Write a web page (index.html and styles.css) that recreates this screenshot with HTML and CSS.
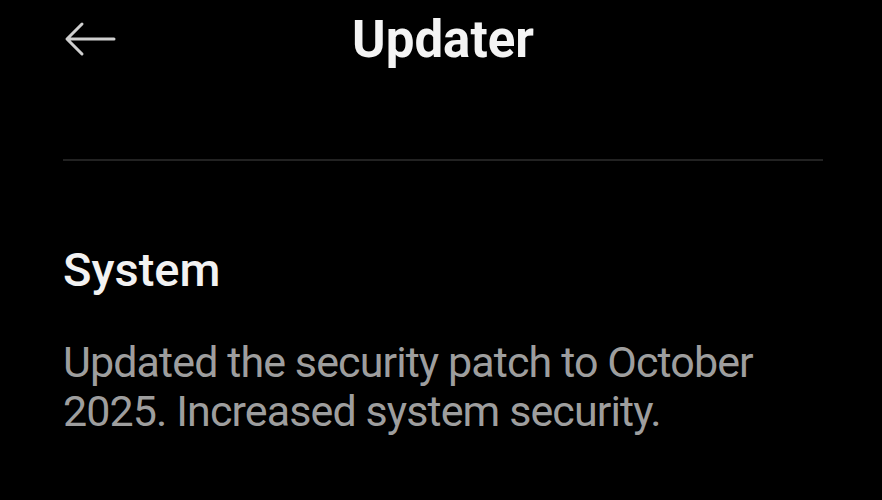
FILE: index.html
```html
<!DOCTYPE html>
<html lang="en">
<head>
  <meta charset="UTF-8" />
  <meta name="viewport" content="width=device-width, initial-scale=1.0"/>
  <title>Updater</title>
  <link rel="stylesheet" href="styles.css">
</head>
<body>

  <div class="topbar">
    <button class="back" aria-label="Back">
      <svg width="52" height="36" viewBox="0 0 52 36">
        <path d="M50 18 H4 M18 3 L3 18 L18 33" fill="none" stroke="#cfcfcf" stroke-width="3" stroke-linecap="round" stroke-linejoin="round"/>
      </svg>
    </button>
    <h1 class="title">Updater</h1>
  </div>

  <hr class="divider">

  <div class="section">
    <h2>System</h2>
    <p class="desc">Updated the security patch to October 2025. Increased system security.</p>
  </div>

</body>
</html>
```

FILE: styles.css
```css
body {
  font-family: Roboto, 'Noto Sans', sans-serif;
  background: #000;
  margin: 0;
  padding: 0 59px 0 63px;
  color: #f2f2f2;
  overflow: hidden;
}

.topbar {
  display: grid;
  grid-template-columns: 60px 1fr 60px;
  align-items: center;
  height: 78px;
}

.back {
  background: none;
  border: none;
  padding: 0;
  margin-left: 1px;
  display: flex;
  cursor: pointer;
}

.title {
  margin: 0;
  font-size: 51px;
  font-weight: 700;
  text-align: center;
  color: #f4f4f4;
  letter-spacing: 0;
}

.divider {
  border: none;
  border-top: 2px solid #222;
  margin: 81px 0 0;
}

.section {
  padding-top: 81px;
}

.section h2 {
  margin: 0;
  font-size: 47px;
  font-weight: 500;
  line-height: 56px;
  color: #f2f2f2;
}

.desc {
  margin: 40px 0 0;
  font-size: 43px;
  line-height: 49px;
  color: #9e9e9e;
  letter-spacing: -0.9px;
}
```
